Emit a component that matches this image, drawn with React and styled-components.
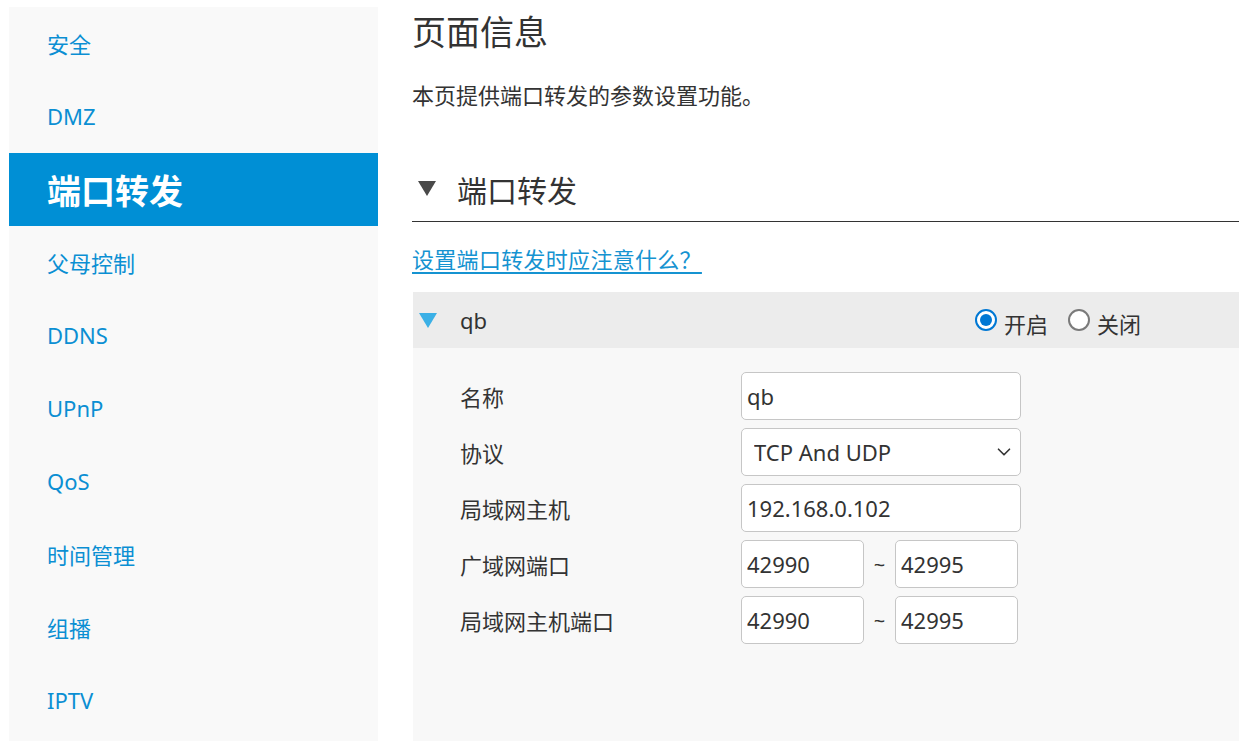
import React from "react";
import styled, { createGlobalStyle } from "styled-components";
import { ChevronDown } from "lucide-react";

const Global = createGlobalStyle`
  html, body {
    margin: 0;
    padding: 0;
    background: #ffffff;
    overflow: hidden;
  }
  body {
    font-family: "Noto Sans", "Noto Sans CJK SC", sans-serif;
    color: #333333;
  }
`;

const Page = styled.div`
  display: flex;
  width: 1239px;
  height: 741px;
  padding: 7px 0 0 9px;
  box-sizing: border-box;
  gap: 34px;
  overflow: hidden;
`;

const Sidebar = styled.nav`
  width: 369px;
  flex-shrink: 0;
  background: #f9f9f9;
  display: flex;
  flex-direction: column;
`;

const NavItem = styled.div`
  height: 73px;
  flex-shrink: 0;
  display: flex;
  align-items: center;
  padding-left: 38px;
  padding-bottom: ${(p) => (p.$active ? "0" : "2px")};
  box-sizing: border-box;
  font-size: ${(p) => (p.$active ? "34px" : "22px")};
  font-weight: ${(p) => (p.$active ? 700 : 400)};
  color: ${(p) => (p.$active ? "#ffffff" : "#0b8fd3")};
  background: ${(p) => (p.$active ? "#008fd5" : "transparent")};
`;

const Content = styled.main`
  flex: 1;
  min-width: 0;
  display: flex;
  flex-direction: column;
  margin-top: -7px;
`;

const Title = styled.h1`
  margin: 8px 0 0;
  font-size: 34px;
  font-weight: 400;
  line-height: 48px;
  color: #333;
`;

const Desc = styled.p`
  margin: 24px 0 0;
  font-size: 22px;
  line-height: 30px;
  color: #333;
`;

const SectionHead = styled.div`
  margin-top: 53px;
  height: 59px;
  box-sizing: border-box;
  padding-bottom: 7px;
  display: flex;
  align-items: center;
  gap: 21px;
  border-bottom: 1px solid #333;
  font-size: 30px;
  color: #333;
`;

const Tri = styled.span`
  width: 0;
  height: 0;
  border-left: 9px solid transparent;
  border-right: 9px solid transparent;
  border-top: 15px solid ${(p) => p.$color};
  margin-left: ${(p) => p.$offset || "6px"};
`;

const HelpLink = styled.a`
  margin-top: 22px;
  font-size: 22px;
  letter-spacing: 0.3px;
  line-height: 30px;
  color: #1593d1;
  text-decoration: underline;
  text-underline-offset: 4px;
  align-self: flex-start;
  cursor: pointer;
`;

const Panel = styled.section`
  margin-top: 18px;
  display: flex;
  flex-direction: column;
  flex: 1;
  margin-left: 1px;
`;

const PanelHead = styled.div`
  height: 56px;
  background: #ececec;
  display: flex;
  align-items: center;
  gap: 23px;
  font-size: 22px;
  color: #333;
`;

const Radios = styled.div`
  margin-left: auto;
  padding-right: 98px;
  display: flex;
  align-items: center;
  gap: 20px;
  padding-top: 6px;
`;

const RadioLabel = styled.label`
  display: flex;
  align-items: center;
  gap: 7px;
  font-size: 22px;
  color: #333;
`;

const RadioDot = styled.span`
  width: 22px;
  height: 22px;
  box-sizing: border-box;
  border-radius: 50%;
  margin-top: -6px;
  background: #ffffff;
  border: ${(p) => (p.$on ? "2px solid #0078d4" : "2px solid #7a7a7a")};
  display: flex;
  align-items: center;
  justify-content: center;
  &::after {
    content: "";
    width: 12px;
    height: 12px;
    border-radius: 50%;
    background: ${(p) => (p.$on ? "#0078d4" : "transparent")};
  }
`;

const PanelBody = styled.div`
  flex: 1;
  background: #f8f8f8;
  padding: 24px 0 0 47px;
  display: flex;
  flex-direction: column;
  gap: 8px;
`;

const Row = styled.div`
  display: grid;
  grid-template-columns: 281px auto;
  align-items: center;
  height: 48px;
`;

const Label = styled.span`
  font-size: 22px;
  color: #333;
`;

const Field = styled.input`
  width: ${(p) => p.$w || "280px"};
  height: 48px;
  box-sizing: border-box;
  border: 1px solid #c6c6c6;
  border-radius: 5px;
  background: #fff;
  padding: 0 5px;
  font-family: inherit;
  font-size: 22px;
  color: #333;
  outline: none;
`;

const SelectWrap = styled.div`
  position: relative;
  width: 280px;
  height: 48px;
`;

const Select = styled.select`
  appearance: none;
  width: 100%;
  height: 100%;
  box-sizing: border-box;
  border: 1px solid #c6c6c6;
  border-radius: 5px;
  background: #fff;
  padding: 0 12px;
  font-family: inherit;
  font-size: 22px;
  color: #333;
  outline: none;
`;

const Chevron = styled(ChevronDown)`
  position: absolute;
  right: 6px;
  top: 13px;
  pointer-events: none;
`;

const Range = styled.div`
  display: flex;
  align-items: center;
`;

const Tilde = styled.span`
  width: 31px;
  text-align: center;
  font-size: 20px;
  color: #333;
`;

const navItems = ["安全", "DMZ", "端口转发", "父母控制", "DDNS", "UPnP", "QoS", "时间管理", "组播", "IPTV"];

export default function App() {
  return (
    <>
      <Global />
      <Page>
        <Sidebar>
          {navItems.map((n) => (
            <NavItem key={n} $active={n === "端口转发"}>
              {n}
            </NavItem>
          ))}
        </Sidebar>
        <Content>
          <Title>页面信息</Title>
          <Desc>本页提供端口转发的参数设置功能。</Desc>
          <SectionHead>
            <Tri $color="#4a4a4a" />
            端口转发
          </SectionHead>
          <HelpLink>设置端口转发时应注意什么？ </HelpLink>
          <Panel>
            <PanelHead>
              <Tri $color="#3bb0e6" $offset="6px" />
              qb
              <Radios>
                <RadioLabel>
                  <RadioDot $on />
                  开启
                </RadioLabel>
                <RadioLabel>
                  <RadioDot />
                  关闭
                </RadioLabel>
              </Radios>
            </PanelHead>
            <PanelBody>
              <Row>
                <Label>名称</Label>
                <Field defaultValue="qb" />
              </Row>
              <Row>
                <Label>协议</Label>
                <SelectWrap>
                  <Select defaultValue="both">
                    <option value="both">TCP And UDP</option>
                    <option value="tcp">TCP</option>
                    <option value="udp">UDP</option>
                  </Select>
                  <Chevron size={22} strokeWidth={1.8} color="#333" />
                </SelectWrap>
              </Row>
              <Row>
                <Label>局域网主机</Label>
                <Field defaultValue="192.168.0.102" />
              </Row>
              <Row>
                <Label>广域网端口</Label>
                <Range>
                  <Field $w="123px" defaultValue="42990" />
                  <Tilde>~</Tilde>
                  <Field $w="123px" defaultValue="42995" />
                </Range>
              </Row>
              <Row>
                <Label>局域网主机端口</Label>
                <Range>
                  <Field $w="123px" defaultValue="42990" />
                  <Tilde>~</Tilde>
                  <Field $w="123px" defaultValue="42995" />
                </Range>
              </Row>
            </PanelBody>
          </Panel>
        </Content>
      </Page>
    </>
  );
}
